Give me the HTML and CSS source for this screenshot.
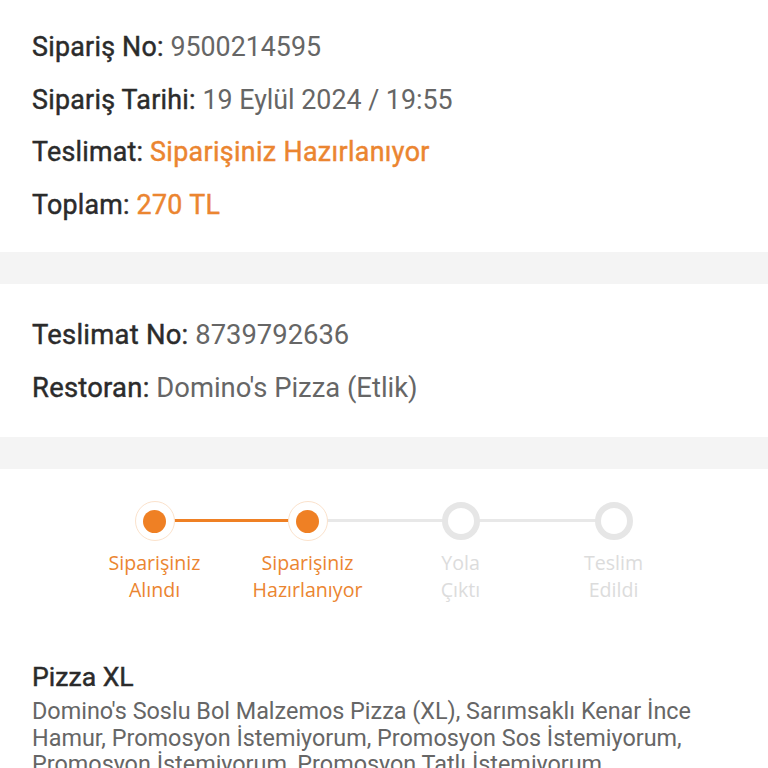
FILE: index.html
```html
<!DOCTYPE html>
<html lang="tr">
<head>
<meta charset="utf-8">
<link rel="stylesheet" href="styles.css">
</head>
<body>
<section class="card info">
  <div class="row"><span class="lbl">Sipariş No:</span> <span class="val">9500214595</span></div>
  <div class="row"><span class="lbl">Sipariş Tarihi:</span> <span class="val">19 Eylül 2024 / 19:55</span></div>
  <div class="row"><span class="lbl">Teslimat:</span> <span class="val orange">Siparişiniz Hazırlanıyor</span></div>
  <div class="row"><span class="lbl">Toplam:</span> <span class="val orange">270 TL</span></div>
</section>
<div class="band"></div>
<section class="card info2">
  <div class="row"><span class="lbl">Teslimat No:</span> <span class="val">8739792636</span></div>
  <div class="row"><span class="lbl">Restoran:</span> <span class="val">Domino's Pizza (Etlik)</span></div>
</section>
<div class="band"></div>
<section class="card detail">
  <div class="stepper">
    <div class="step done first">
      <div class="node"><span class="dot"></span></div>
      <div class="label">Siparişiniz<br>Alındı</div>
    </div>
    <div class="step done current">
      <div class="node"><span class="dot"></span></div>
      <div class="label">Siparişiniz<br>Hazırlanıyor</div>
    </div>
    <div class="step todo">
      <div class="node"><span class="ring"></span></div>
      <div class="label">Yola<br>Çıktı</div>
    </div>
    <div class="step todo last">
      <div class="node"><span class="ring"></span></div>
      <div class="label">Teslim<br>Edildi</div>
    </div>
  </div>
  <div class="product">
    <div class="pname">Pizza XL</div>
    <div class="pdesc">Domino's Soslu Bol Malzemos Pizza (XL), Sarımsaklı Kenar İnce Hamur, Promosyon İstemiyorum, Promosyon Sos İstemiyorum, Promosyon İstemiyorum, Promosyon Tatlı İstemiyorum</div>
  </div>
</section>
</body>
</html>
```
FILE: styles.css
```css
html, body {
  margin: 0;
  padding: 0;
  background: #ffffff;
}
body {
  font-family: Roboto, "Noto Sans", sans-serif;
  width: 768px;
  height: 768px;
  overflow: hidden;
}
.card {
  background: #ffffff;
  padding-left: 32px;
  padding-right: 32px;
}
.info {
  padding-top: 21px;
  padding-bottom: 21px;
}
.info2 {
  padding-top: 25px;
  padding-bottom: 23px;
}
.row {
  font-size: 26.8px;
  line-height: 52.5px;
  white-space: nowrap;
}
.info2 .row {
  font-size: 27.4px;
}
.lbl {
  color: #2b2b2b;
  font-weight: 400;
  letter-spacing: 0.25px;
  -webkit-text-stroke: 0.45px #2b2b2b;
}
.val {
  color: #666666;
}
.val.orange {
  color: #eb8530;
  letter-spacing: 0.35px;
  -webkit-text-stroke: 0.45px #eb8530;
}
.band {
  height: 32px;
  background: #f4f4f4;
}
.detail {
  padding-top: 32px;
}
.stepper {
  display: flex;
  margin: 0 46px;
}
.step {
  flex: 1;
  display: flex;
  flex-direction: column;
  align-items: center;
  position: relative;
}
.step::before, .step::after {
  content: "";
  position: absolute;
  top: 18px;
  height: 3px;
  width: 50%;
  background: #e8e8e8;
}
.step::before { left: 0; }
.step::after { right: 0; }
.step.first::before, .step.last::after { display: none; }
.step.first::after, .step.current::before { background: #ef8024; }
.node {
  width: 40px;
  height: 40px;
  border-radius: 50%;
  display: flex;
  align-items: center;
  justify-content: center;
  position: relative;
  z-index: 1;
}
.done .node {
  background: #ffffff;
  box-sizing: border-box;
  border: 1.5px solid #fbe2cc;
}
.dot {
  width: 23px;
  height: 23px;
  border-radius: 50%;
  background: #ef8024;
}
.ring {
  width: 38px;
  height: 38px;
  box-sizing: border-box;
  border-radius: 50%;
  border: 6px solid #e6e6e6;
  background: #ffffff;
}
.label {
  margin-top: 8px;
  font-family: "Open Sans", "Noto Sans", sans-serif;
  font-size: 19.6px;
  line-height: 27px;
  text-align: center;
  color: #eb8530;
}
.todo .label {
  color: #dcdcdc;
}
.product {
  padding-top: 59px;
}
.pname {
  font-size: 26.6px;
  color: #2b2b2b;
  -webkit-text-stroke: 0.45px #2b2b2b;
  line-height: 30px;
}
.pdesc {
  margin-top: 6px;
  font-size: 23.4px;
  line-height: 26.5px;
  color: #666666;
}
```
